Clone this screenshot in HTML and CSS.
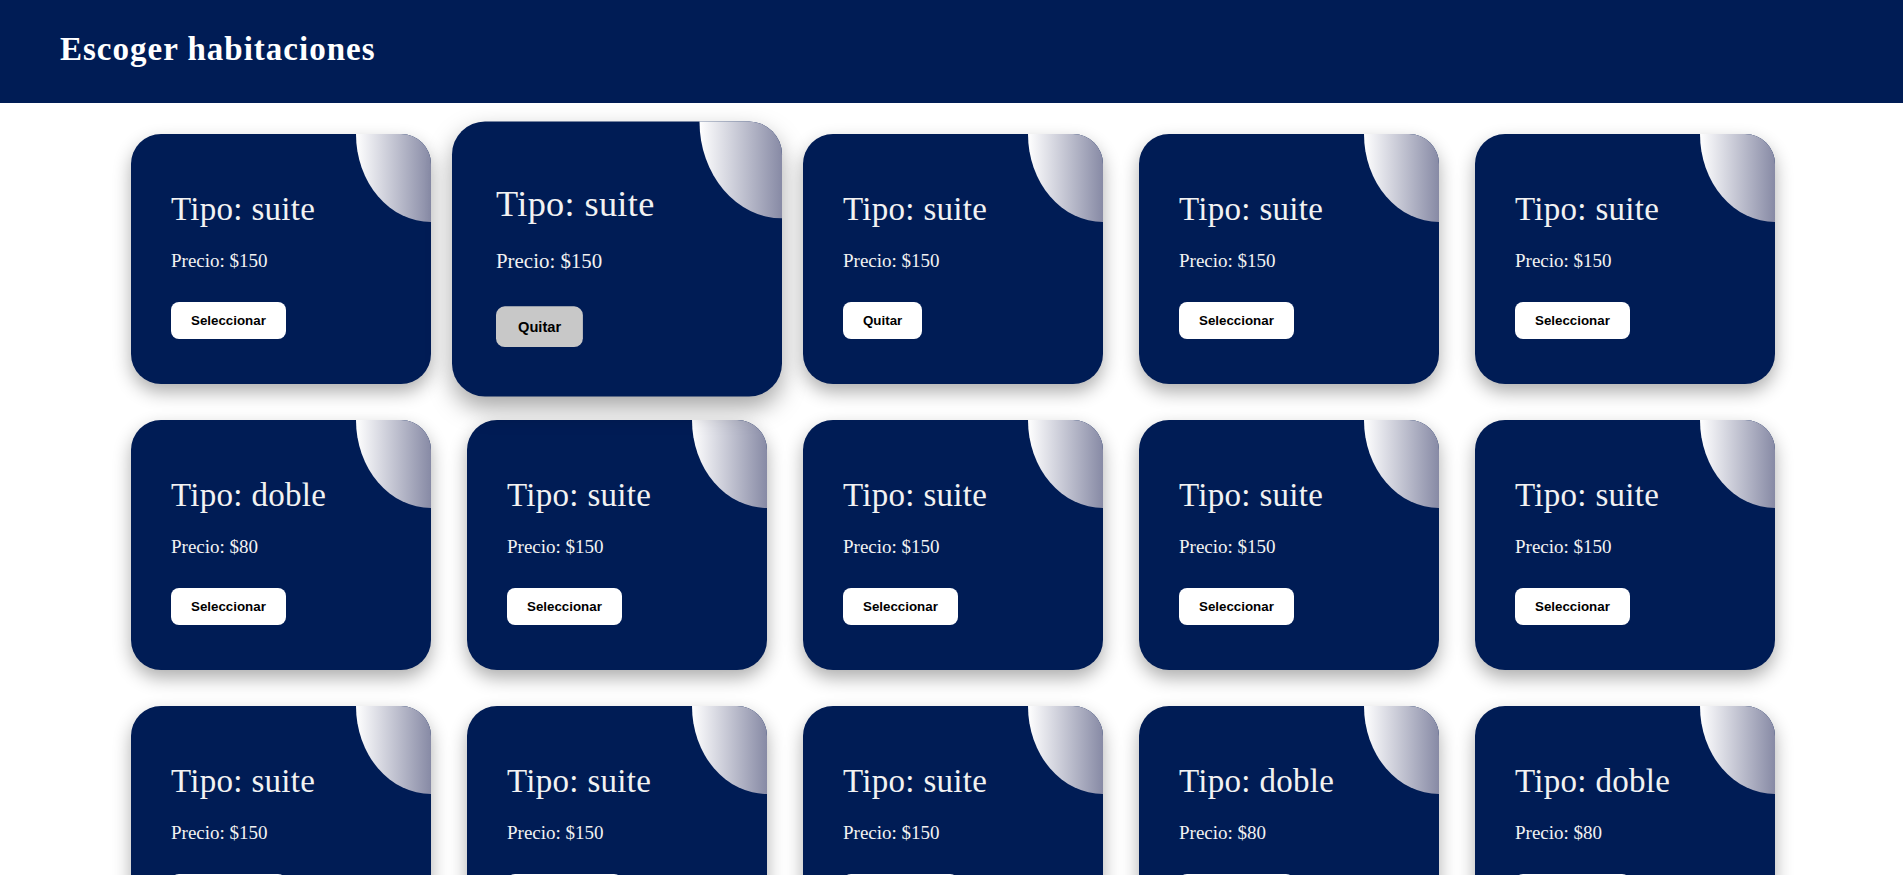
FILE: index.html
```html
<!DOCTYPE html>
<html lang="es">
<head>
<meta charset="utf-8">
<title>Escoger habitaciones</title>
<link rel="stylesheet" href="styles.css">
</head>
<body>
<header class="topbar">
  <h1 class="topbar-title">Escoger habitaciones</h1>
</header>
<main class="rooms">
  <div class="card"><h2 class="card-title">Tipo: suite</h2><p class="card-price">Precio: $150</p><button class="btn">Seleccionar</button></div>
  <div class="card card-hover"><h2 class="card-title">Tipo: suite</h2><p class="card-price">Precio: $150</p><button class="btn btn-hover">Quitar</button></div>
  <div class="card"><h2 class="card-title">Tipo: suite</h2><p class="card-price">Precio: $150</p><button class="btn">Quitar</button></div>
  <div class="card"><h2 class="card-title">Tipo: suite</h2><p class="card-price">Precio: $150</p><button class="btn">Seleccionar</button></div>
  <div class="card"><h2 class="card-title">Tipo: suite</h2><p class="card-price">Precio: $150</p><button class="btn">Seleccionar</button></div>

  <div class="card"><h2 class="card-title">Tipo: doble</h2><p class="card-price">Precio: $80</p><button class="btn">Seleccionar</button></div>
  <div class="card"><h2 class="card-title">Tipo: suite</h2><p class="card-price">Precio: $150</p><button class="btn">Seleccionar</button></div>
  <div class="card"><h2 class="card-title">Tipo: suite</h2><p class="card-price">Precio: $150</p><button class="btn">Seleccionar</button></div>
  <div class="card"><h2 class="card-title">Tipo: suite</h2><p class="card-price">Precio: $150</p><button class="btn">Seleccionar</button></div>
  <div class="card"><h2 class="card-title">Tipo: suite</h2><p class="card-price">Precio: $150</p><button class="btn">Seleccionar</button></div>

  <div class="card"><h2 class="card-title">Tipo: suite</h2><p class="card-price">Precio: $150</p><button class="btn">Seleccionar</button></div>
  <div class="card"><h2 class="card-title">Tipo: suite</h2><p class="card-price">Precio: $150</p><button class="btn">Seleccionar</button></div>
  <div class="card"><h2 class="card-title">Tipo: suite</h2><p class="card-price">Precio: $150</p><button class="btn">Seleccionar</button></div>
  <div class="card"><h2 class="card-title">Tipo: doble</h2><p class="card-price">Precio: $80</p><button class="btn">Seleccionar</button></div>
  <div class="card"><h2 class="card-title">Tipo: doble</h2><p class="card-price">Precio: $80</p><button class="btn">Seleccionar</button></div>
</main>
</body>
</html>
```
FILE: styles.css
```css
* { box-sizing: border-box; }

body {
  margin: 0;
  background: #ffffff;
  font-family: "Liberation Serif", "Times New Roman", serif;
}

.topbar {
  height: 103px;
  background: #001c55;
  display: flex;
  align-items: center;
  padding: 0 60px 6px 60px;
}

.topbar-title {
  margin: 0;
  color: #ffffff;
  font-size: 33px;
  font-weight: 600;
  line-height: 38px;
  letter-spacing: 1px;
}

.rooms {
  display: grid;
  grid-template-columns: repeat(5, 300px);
  gap: 36px;
  justify-content: center;
  padding: 31px 0 40px 3px;
}

.card {
  position: relative;
  overflow: hidden;
  height: 250px;
  background: #001c55;
  border-radius: 30px;
  box-shadow: 0 8px 18px rgba(0, 0, 0, 0.32);
  padding: 56px 40px 0 40px;
  display: flex;
  flex-direction: column;
  align-items: flex-start;
  color: #f2f2f2;
}

.card::before {
  content: "";
  position: absolute;
  width: 150px;
  height: 176px;
  top: -88px;
  right: -75px;
  border-radius: 50%;
  background: linear-gradient(to right, #ffffff 0%, #878aa5 50%, #1a2258 100%);
}

.card-hover {
  transform: scale(1.1);
  box-shadow: 0 10px 22px rgba(0, 0, 0, 0.35);
  z-index: 1;
}

.card-title {
  margin: 0;
  font-size: 33px;
  font-weight: 400;
  line-height: 38px;
  letter-spacing: 0.3px;
}

.card-price {
  margin: 22px 0 0 0;
  font-size: 19px;
  line-height: 21px;
}

.btn {
  margin-top: 31px;
  height: 37px;
  padding: 0 20px;
  border: none;
  border-radius: 8px;
  background: #ffffff;
  color: #000000;
  font-family: "Liberation Sans", Arial, sans-serif;
  font-size: 13.33px;
  font-weight: 700;
}

.btn-hover {
  background: #c8c8c8;
}
```
